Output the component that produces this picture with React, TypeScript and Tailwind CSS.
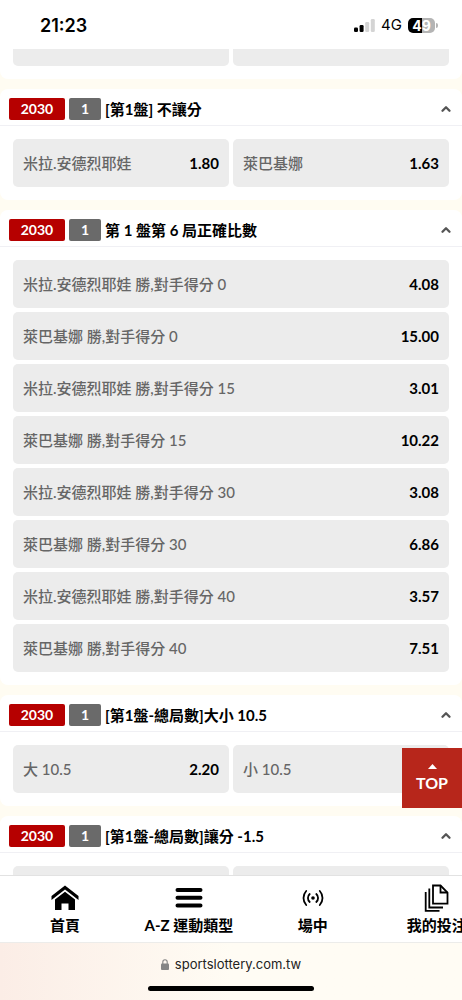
import { ChevronUp } from "lucide-react";

type Odd = {
  label: string;
  value: string;
};

type Market = {
  id: string;
  title: string;
  columns: 1 | 2;
  odds: Odd[];
};

const markets: Market[] = [
  {
    id: "winner",
    title: "[第1盤] 不讓分",
    columns: 2,
    odds: [
      { label: "米拉.安德烈耶娃", value: "1.80" },
      { label: "萊巴基娜", value: "1.63" },
    ],
  },
  {
    id: "game-score",
    title: "第 1 盤第 6 局正確比數",
    columns: 1,
    odds: [
      { label: "米拉.安德烈耶娃 勝,對手得分 0", value: "4.08" },
      { label: "萊巴基娜 勝,對手得分 0", value: "15.00" },
      { label: "米拉.安德烈耶娃 勝,對手得分 15", value: "3.01" },
      { label: "萊巴基娜 勝,對手得分 15", value: "10.22" },
      { label: "米拉.安德烈耶娃 勝,對手得分 30", value: "3.08" },
      { label: "萊巴基娜 勝,對手得分 30", value: "6.86" },
      { label: "米拉.安德烈耶娃 勝,對手得分 40", value: "3.57" },
      { label: "萊巴基娜 勝,對手得分 40", value: "7.51" },
    ],
  },
  {
    id: "total",
    title: "[第1盤-總局數]大小 10.5",
    columns: 2,
    odds: [
      { label: "大 10.5", value: "2.20" },
      { label: "小 10.5", value: "" },
    ],
  },
  {
    id: "handicap",
    title: "[第1盤-總局數]讓分 -1.5",
    columns: 2,
    odds: [
      { label: "", value: "" },
      { label: "", value: "" },
    ],
  },
];

const StatusBar = () => (
  <header className="flex h-[49px] shrink-0 items-center justify-between bg-white pt-0.5 pr-6 pl-10 font-['Inter',sans-serif] text-black">
    <time className="text-lg font-semibold">21:23</time>
    <div className="flex items-center gap-1.5">
      <svg width="21" height="13" viewBox="0 0 21 13" aria-hidden="true">
        <rect x="0" y="8.5" width="4" height="4.5" rx="1.2" />
        <rect x="5.6" y="6" width="4" height="7" rx="1.2" />
        <rect x="11.2" y="3" width="4" height="10" rx="1.2" fill="#d4d4d4" />
        <rect x="16.8" y="0" width="4" height="13" rx="1.2" fill="#d4d4d4" />
      </svg>
      <span className="text-[15px]">4G</span>
      <div className="flex items-center gap-px">
        <span className="flex h-[15px] w-[27px] items-center justify-center rounded-[5px] bg-linear-to-r from-black from-50% to-[#b4b4b4] to-50% text-sm leading-none font-bold text-white">
          49
        </span>
        <span className="h-[5px] w-0.5 rounded-r-full bg-[#b4b4b4]" />
      </div>
    </div>
  </header>
);

const OddButton = ({ label, value }: Odd) => (
  <button
    type="button"
    className="flex h-12 w-full items-center justify-between rounded-[5px] bg-[#ececec] px-2.5 text-left"
  >
    <span className="font-medium text-[#666]">{label}</span>
    <span className="font-bold text-black">{value}</span>
  </button>
);

const MarketCard = ({ title, columns, odds }: Market) => (
  <section className="shrink-0 rounded-lg bg-white">
    <button
      type="button"
      className="flex h-[37px] w-full items-center border-b border-[#f0f0f4] px-[9px] pt-1 text-left"
    >
      <span className="flex h-[22px] w-14 items-center justify-center rounded-xs bg-[#b60000] text-sm font-bold text-white">
        2030
      </span>
      <span className="ml-1 flex h-[22px] w-8 items-center justify-center rounded-xs bg-[#6a6a6a] text-sm font-bold text-white">
        1
      </span>
      <span className="ml-1 flex-1 font-bold text-black">{title}</span>
      <ChevronUp className="size-3.5 text-[#555]" strokeWidth={4} />
    </button>
    <div className={columns === 2 ? "grid grid-cols-2 gap-1 p-[13px]" : "grid gap-1 p-[13px]"}>
      {odds.map((odd, i) => (
        <OddButton key={i} {...odd} />
      ))}
    </div>
  </section>
);

const HomeIcon = () => (
  <svg width="28" height="26" viewBox="0 0 28 26" aria-hidden="true">
    <path d="M14 0.5 27.5 11v4L14 4.6.5 15v-4z" />
    <path d="M14 6.8 24 14.5V25h-6.5v-6.5h-7V25H4V14.5z" />
  </svg>
);

const MenuIcon = () => (
  <svg width="28" height="26" viewBox="0 0 28 26" stroke="currentColor" strokeWidth="4" strokeLinecap="round" aria-hidden="true">
    <path d="M2.5 5h23M2.5 12.7h23M2.5 20.5h23" />
  </svg>
);

const LiveIcon = () => (
  <svg width="28" height="26" viewBox="0 0 28 26" fill="none" stroke="currentColor" strokeWidth="1.8" strokeLinecap="round" aria-hidden="true">
    <circle cx="14" cy="13" r="1.8" fill="currentColor" stroke="none" />
    <path d="M10.7 9a5.4 5.4 0 0 0 0 8M17.3 9a5.4 5.4 0 0 1 0 8M7.2 6a10.4 10.4 0 0 0 0 14M20.8 6a10.4 10.4 0 0 1 0 14" />
  </svg>
);

const BetsIcon = () => (
  <svg width="28" height="28" viewBox="0 0 28 28" fill="none" stroke="currentColor" strokeWidth="1.8" aria-hidden="true">
    <path d="M10 1.5h7.5l7 7v11.2H10z" />
    <path d="M17.5 1.5v7h7" />
    <path d="M6.3 4.5v19H20M2.7 8v18.8h13.8" />
  </svg>
);

const tabs = [
  { label: "首頁", icon: <HomeIcon /> },
  { label: "A-Z 運動類型", icon: <MenuIcon /> },
  { label: "場中", icon: <LiveIcon /> },
  { label: "我的投注", icon: <BetsIcon /> },
];

const TabBar = () => (
  <nav className="flex h-[67px] shrink-0 overflow-hidden border-t border-[#e2e2e2] bg-white pl-[3px]">
    {tabs.map((tab) => (
      <a key={tab.label} href="#" className="flex w-[27%] shrink-0 flex-col items-center pt-2 text-black">
        <span className="flex h-7 items-center">{tab.icon}</span>
        <span className="leading-[26px] font-bold whitespace-nowrap">{tab.label}</span>
      </a>
    ))}
  </nav>
);

const AddressBar = () => (
  <footer className="flex h-[58px] shrink-0 flex-col items-center justify-between border-t border-[#ececea] bg-linear-to-r from-[#fbede6] to-[#fffcf4] to-50% pt-[11px] pb-[9px] font-['Inter',sans-serif]">
    <div className="flex items-center gap-1.5 text-[13px] leading-5 text-[#222]">
      <svg width="8" height="11" viewBox="0 0 8 11" aria-hidden="true">
        <rect y="4.5" width="8" height="6.5" rx="1" fill="#858585" />
        <path d="M1.8 5V3a2.2 2.2 0 0 1 4.4 0v2" fill="none" stroke="#858585" strokeWidth="1.1" />
      </svg>
      <span>sportslottery.com.tw</span>
    </div>
    <div className="h-[5px] w-[166px] rounded-full bg-black" />
  </footer>
);

const App = () => {
  return (
    <div className="flex h-screen flex-col overflow-hidden bg-white font-['Lato','Noto_Sans_CJK_TC',sans-serif] text-[15px]">
      <StatusBar />
      <main className="relative min-h-0 flex-1 overflow-hidden bg-[#fffcf2]">
        <div className="flex flex-col gap-2.5">
          {/* tail of the market scrolled under the status bar */}
          <section className="rounded-b-lg bg-white px-[13px] pb-[13px]">
            <div className="flex h-[17px] items-end gap-1 overflow-hidden">
              <OddButton label="" value="" />
              <OddButton label="" value="" />
            </div>
          </section>
          {markets.map((market) => (
            <MarketCard key={market.id} {...market} />
          ))}
        </div>
        <button
          type="button"
          className="absolute right-0 bottom-[67px] flex size-[60px] flex-col items-center justify-center gap-1 bg-[#b7261b] text-base font-bold text-white"
        >
          <svg width="9" height="5" viewBox="0 0 9 5" fill="currentColor" aria-hidden="true">
            <path d="M4.5 0 9 5H0z" />
          </svg>
          <span className="leading-5">TOP</span>
        </button>
      </main>
      <TabBar />
      <AddressBar />
    </div>
  );
};

export default App;
